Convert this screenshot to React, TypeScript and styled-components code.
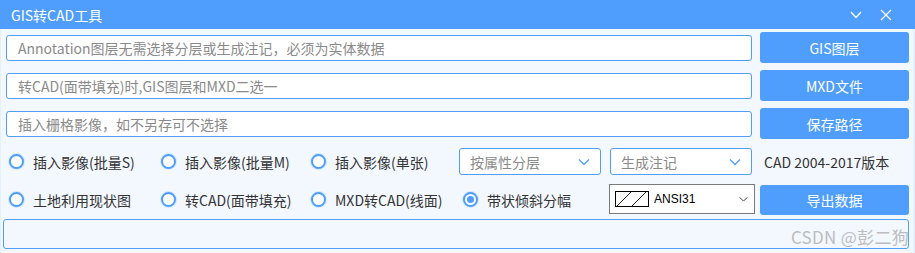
import React from 'react';
import styled, { createGlobalStyle } from 'styled-components';

const BLUE = '#4f9efd';

const GlobalStyle = createGlobalStyle`
  html, body {
    margin: 0;
    padding: 0;
    background: #ffffff;
  }
  body {
    font-family: "Noto Sans CJK SC", "Noto Sans", sans-serif;
  }
`;

const Window = styled.div`
  width: 915px;
  height: 253px;
  display: flex;
  flex-direction: column;
  background: #f3f8ff;
  overflow: hidden;
  position: relative;
`;

const TitleBar = styled.div`
  height: 29px;
  flex: none;
  background: ${BLUE};
  display: flex;
  align-items: center;
  padding: 0 23px 0 11px;
  color: #ffffff;
  font-size: 14px;
`;

const Title = styled.div`
  flex: 1;
`;

const TitleButtons = styled.div`
  display: flex;
  align-items: center;
  gap: 18px;
`;

const Body = styled.div`
  flex: 1;
  display: flex;
  flex-direction: column;
  padding: 3px 4px 3px 5px;
  border-left: 1px solid #e6f0fd;
  border-right: 2px solid #e6f0fd;
`;

const FieldRow = styled.div`
  display: grid;
  grid-template-columns: 1fr 149px;
  column-gap: 8px;
  height: 31px;
  margin-bottom: 7px;
`;

const TextField = styled.div`
  align-self: center;
  height: 26px;
  box-sizing: border-box;
  border: 1px solid ${BLUE};
  border-radius: 3px;
  background: #ffffff;
  display: flex;
  align-items: center;
  padding-left: 11px;
  color: #8a8a8a;
  font-size: 14px;
  margin-top: 1px;
`;

const ActionButton = styled.div<{ $offset?: number }>`
  background: ${BLUE};
  border-radius: 3px;
  color: #ffffff;
  font-size: 14px;
  display: flex;
  align-items: center;
  justify-content: center;
  margin-top: ${(p) => p.$offset ?? 0}px;
`;

const OptionGrid = styled.div`
  display: grid;
  grid-template-columns: 152px 150px 150px 151px 151px 149px;
  grid-template-rows: 31px 31px;
  row-gap: 7px;
`;

const RadioItem = styled.div<{ $indent?: number }>`
  display: flex;
  align-items: center;
  gap: 9px;
  padding-left: ${(p) => p.$indent ?? 3}px;
  color: #333333;
  font-size: 14px;
  white-space: nowrap;
`;

const RadioCircle = styled.span<{ $checked?: boolean }>`
  width: 15px;
  height: 15px;
  box-sizing: border-box;
  border-radius: 50%;
  border: 2px solid ${BLUE};
  background: #ffffff;
  display: flex;
  align-items: center;
  justify-content: center;
  box-shadow: 0 0 0 1px rgba(79, 158, 253, 0.18);
  &::after {
    content: '';
    display: ${(p) => (p.$checked ? 'block' : 'none')};
    width: 7px;
    height: 7px;
    border-radius: 50%;
    background: ${BLUE};
  }
`;

const Combo = styled.div`
  align-self: center;
  margin-left: 1px;
  width: 142px;
  height: 27px;
  box-sizing: border-box;
  border: 1px solid ${BLUE};
  border-radius: 3px;
  background: #ffffff;
  display: flex;
  align-items: center;
  justify-content: space-between;
  padding: 0 10px 0 10px;
  color: #8a8a8a;
  font-size: 14px;
`;

const HatchCombo = styled.div`
  align-self: center;
  width: 146px;
  height: 30px;
  margin-top: -1px;
  box-sizing: border-box;
  border: 1px solid #7a7a7a;
  background: #ffffff;
  display: flex;
  align-items: center;
  padding: 0 6px 0 5px;
  color: #000000;
  font-size: 12px;
  font-family: "Liberation Sans", "Noto Sans", sans-serif;
`;

const HatchName = styled.span`
  flex: 1;
  margin-left: 5px;
`;

const VersionText = styled.div`
  display: flex;
  align-items: center;
  padding-left: 4px;
  color: #333333;
  font-size: 14px;
  white-space: nowrap;
`;

const StatusBox = styled.div`
  margin-top: 4px;
  height: 30px;
  box-sizing: border-box;
  border: 1px solid ${BLUE};
  border-radius: 3px;
  background: #f3f8ff;
  margin-left: -3px;
  margin-right: 0;
`;

const Watermark = styled.div`
  position: absolute;
  right: 6px;
  bottom: 4px;
  color: #bdbdbd;
  font-size: 17px;
  letter-spacing: 0.3px;
`;

const Chevron = ({ color = BLUE, size = 12 }: { color?: string; size?: number }) => (
  <svg width={size} height={size / 2 + 2} viewBox="0 0 12 8">
    <polyline points="1,1.5 6,6.5 11,1.5" fill="none" stroke={color} strokeWidth="1.3" />
  </svg>
);

const radioRows = [
  [
    { label: '插入影像(批量S)' },
    { label: '插入影像(批量M)' },
    { label: '插入影像(单张)' },
  ],
  [
    { label: '土地利用现状图' },
    { label: '转CAD(面带填充)' },
    { label: 'MXD转CAD(线面)' },
    { label: '带状倾斜分幅', checked: true, indent: 5 },
  ],
];

export default function App() {
  return (
    <>
      <GlobalStyle />
      <Window>
        <TitleBar>
          <Title>GIS转CAD工具</Title>
          <TitleButtons>
            <svg width="12" height="8" viewBox="0 0 12 8">
              <polyline points="1,1 6,6.5 11,1" fill="none" stroke="#fff" strokeWidth="1.2" />
            </svg>
            <svg width="12" height="12" viewBox="0 0 12 12">
              <path d="M1 1 L11 11 M11 1 L1 11" stroke="#fff" strokeWidth="1.2" />
            </svg>
          </TitleButtons>
        </TitleBar>
        <Body>
          <FieldRow>
            <TextField>Annotation图层无需选择分层或生成注记，必须为实体数据</TextField>
            <ActionButton>GIS图层</ActionButton>
          </FieldRow>
          <FieldRow>
            <TextField>转CAD(面带填充)时,GIS图层和MXD二选一</TextField>
            <ActionButton>MXD文件</ActionButton>
          </FieldRow>
          <FieldRow>
            <TextField>插入栅格影像，如不另存可不选择</TextField>
            <ActionButton>保存路径</ActionButton>
          </FieldRow>
          <OptionGrid>
            {radioRows[0].map((r) => (
              <RadioItem key={r.label}>
                <RadioCircle />
                {r.label}
              </RadioItem>
            ))}
            <Combo>
              按属性分层
              <Chevron />
            </Combo>
            <Combo>
              生成注记
              <Chevron />
            </Combo>
            <VersionText>CAD 2004-2017版本</VersionText>
            {radioRows[1].map((r) => (
              <RadioItem key={r.label} $indent={r.indent}>
                <RadioCircle $checked={r.checked} />
                {r.label}
              </RadioItem>
            ))}
            <HatchCombo>
              <svg width="34" height="16" viewBox="0 0 34 16">
                <rect x="0.5" y="0.5" width="33" height="15" fill="#fff" stroke="#000" />
                <path d="M2 15 L16 1 M17 15 L31 1" stroke="#000" strokeWidth="0.9" />
              </svg>
              <HatchName>ANSI31</HatchName>
              <Chevron color="#444" size={9} />
            </HatchCombo>
            <ActionButton $offset={1}>导出数据</ActionButton>
          </OptionGrid>
          <StatusBox />
        </Body>
        <Watermark>CSDN @彭二狗</Watermark>
      </Window>
    </>
  );
}
